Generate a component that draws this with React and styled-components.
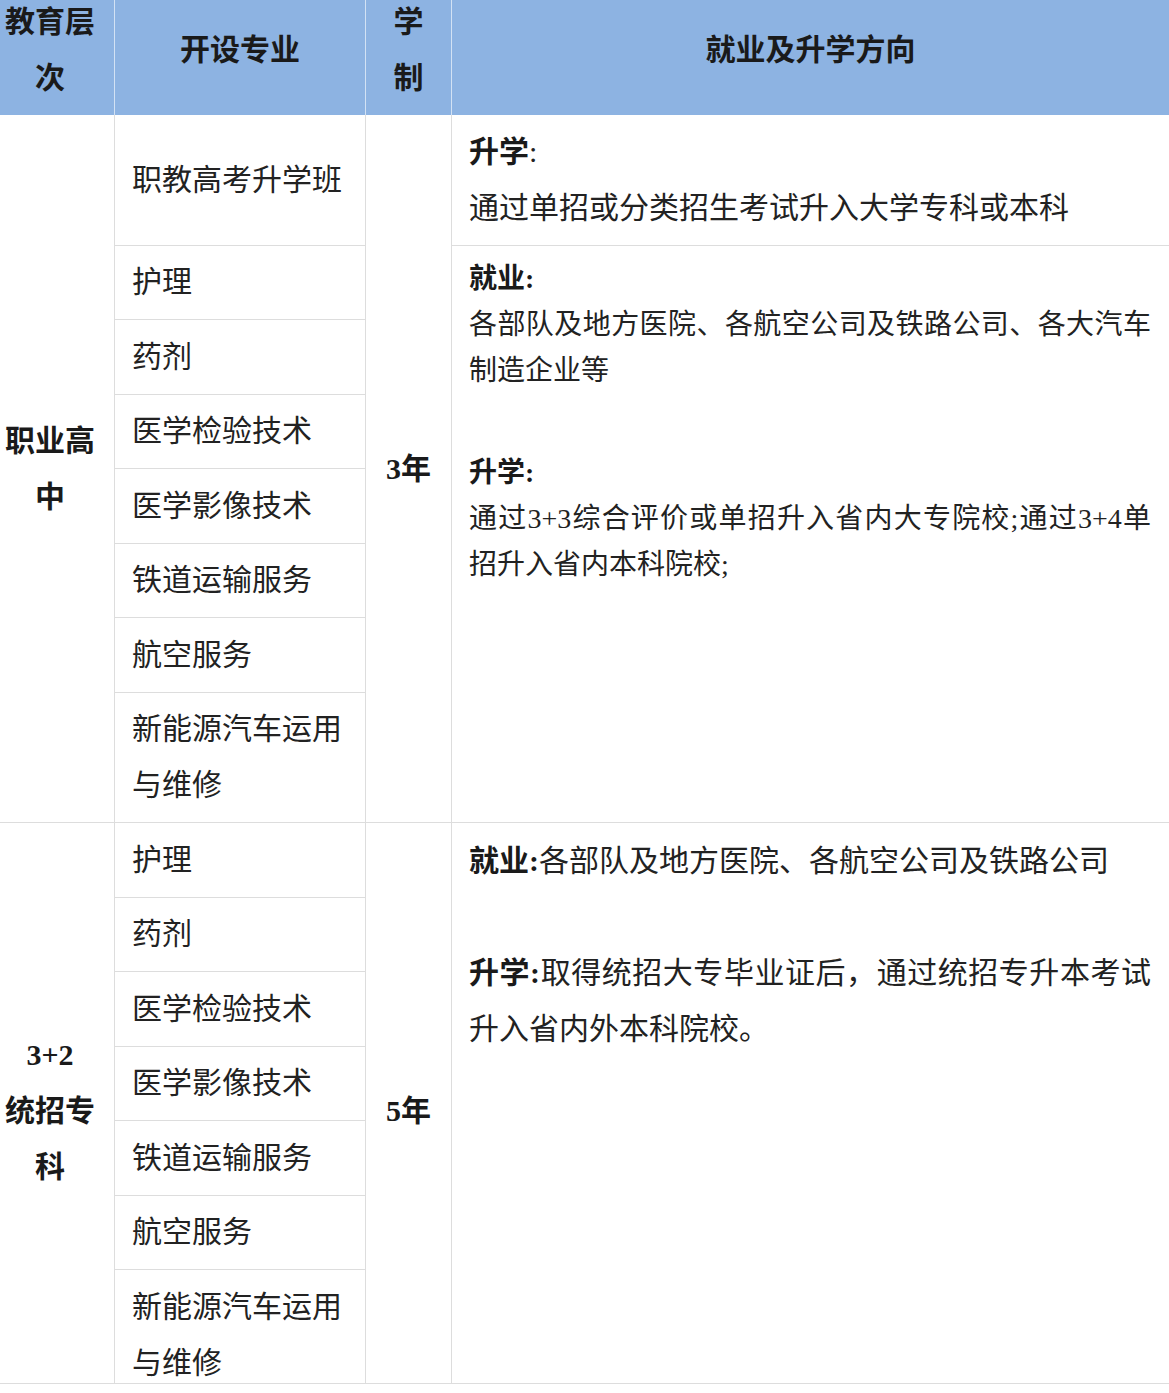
import styled, { createGlobalStyle } from "styled-components";

//---------------------- DATA -------------------------------
const majors = [
    "护理",
    "药剂",
    "医学检验技术",
    "医学影像技术",
    "铁道运输服务",
    "航空服务",
    "新能源汽车运用与维修",
];

//---------------------- COMPONENT --------------------------
const App = () => {
    return (
        <>
            <GlobalStyle />
            <Frame>
                <Table>
                    <colgroup>
                        <col style={{ width: 129 }} />
                        <col style={{ width: 251 }} />
                        <col style={{ width: 86 }} />
                        <col style={{ width: 717 }} />
                    </colgroup>
                    <thead>
                        <tr>
                            <Th>教育层次</Th>
                            <Th>开设专业</Th>
                            <Th>学制</Th>
                            <Th $last>就业及升学方向</Th>
                        </tr>
                    </thead>
                    <tbody>
                        {/* 职业高中 */}
                        <tr>
                            <LevelCell rowSpan={8}>职业高中</LevelCell>
                            <MajorCell>职教高考升学班</MajorCell>
                            <YearCell rowSpan={8}>3年</YearCell>
                            <InfoCell $middle>
                                <Line $lh={56}><Strong>升学</Strong>:</Line>
                                <Line $lh={56}>通过单招或分类招生考试升入大学专科或本科</Line>
                            </InfoCell>
                        </tr>
                        {majors.map((m, i) => (
                            <tr key={"a" + i}>
                                <MajorCell>{m}</MajorCell>
                                {i === 0 && (
                                    <InfoCell rowSpan={7} $size={28}>
                                        <Line $lh={46}><Strong>就业:</Strong></Line>
                                        <Line $lh={46}>各部队及地方医院、各航空公司及铁路公司、各大汽车制造企业等</Line>
                                        <Blank />
                                        <Line $lh={46}><Strong>升学:</Strong></Line>
                                        <Line $lh={46}>通过3+3综合评价或单招升入省内大专院校;通过3+4单招升入省内本科院校;</Line>
                                    </InfoCell>
                                )}
                            </tr>
                        ))}

                        {/* 3+2 统招专科 */}
                        {majors.map((m, i) => (
                            <tr key={"b" + i}>
                                {i === 0 && (
                                    <LevelCell rowSpan={7}>3+2<br />统招专科</LevelCell>
                                )}
                                <MajorCell>{m}</MajorCell>
                                {i === 0 && <YearCell rowSpan={7}>5年</YearCell>}
                                {i === 0 && (
                                    <InfoCell rowSpan={7}>
                                        <Line $lh={56}><Strong>就业:</Strong>各部队及地方医院、各航空公司及铁路公司</Line>
                                        <Blank />
                                        <Line $lh={56}><Strong>升学:</Strong>取得统招大专毕业证后，通过统招专升本考试升入省内外本科院校。</Line>
                                    </InfoCell>
                                )}
                            </tr>
                        ))}
                    </tbody>
                </Table>
            </Frame>
        </>
    );
};
export default App;

//----------------------- STYLE -----------------------------
const GlobalStyle = createGlobalStyle`
    html, body {
        margin: 0;
        padding: 0;
        background: #ffffff;
    }
    body {
        font-family: "Liberation Serif", "Noto Sans CJK SC", serif;
        color: #222222;
        overflow: hidden;
    }
`;

const Frame = styled.div`
    margin: -14px 0 0 -14px;
    height: 1397px;
    overflow: hidden;
    border-bottom: 1px solid #dddddd;
`;

const Table = styled.table`
    width: 1183px;
    table-layout: fixed;
    border-collapse: separate;
    border-spacing: 0;
    font-size: 30px;
`;

const Th = styled.th`
    background: #8db3e2;
    color: #1a1a1a;
    font-weight: 700;
    font-size: 30px;
    line-height: 56px;
    text-align: center;
    vertical-align: middle;
    padding: 8px 18px 9px;
    border-right: ${(p) => (p.$last ? "none" : "1px solid #d3e2f4")};
`;

const Td = styled.td`
    border-right: 1px solid #dddddd;
    border-bottom: 1px solid #dddddd;
    padding: 8.75px 18px;
    line-height: 56px;
`;

const LevelCell = styled(Td)`
    text-align: center;
    vertical-align: middle;
    font-weight: 700;
    color: #1a1a1a;
`;

const MajorCell = styled(Td)`
    vertical-align: middle;
    text-align: left;
    padding-left: 17px;
`;

const YearCell = styled(Td)`
    text-align: center;
    vertical-align: middle;
    font-weight: 700;
    color: #1a1a1a;
    padding-left: 10px;
    padding-right: 10px;
`;

const InfoCell = styled(Td)`
    border-right: none;
    vertical-align: ${(p) => (p.$middle ? "middle" : "top")};
    padding: ${(p) => (p.$middle ? "8.75px 18px 8.75px 17px" : "10px 18px 10px 17px")};
    font-size: ${(p) => (p.$size || 30)}px;
`;

const Line = styled.p`
    margin: 0;
    line-height: ${(p) => p.$lh}px;
    text-align: justify;
`;

const Blank = styled.div`
    height: 56px;
`;

const Strong = styled.strong`
    font-weight: 700;
    color: #1a1a1a;
`;
